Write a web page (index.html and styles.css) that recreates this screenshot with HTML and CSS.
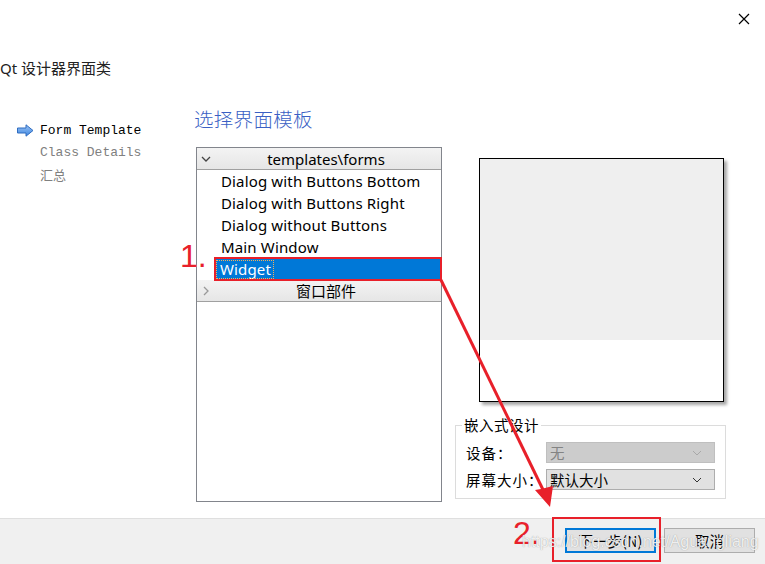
FILE: index.html
```html
<!DOCTYPE html>
<html>
<head>
<meta charset="utf-8">
<link rel="stylesheet" href="styles.css">
</head>
<body>
<div class="dialog">
  <div class="topbar">
    <svg class="close" width="12" height="12" viewBox="0 0 12 12"><path d="M1 1 L11 11 M11 1 L1 11" stroke="#000" stroke-width="1.2" fill="none"/></svg>
  </div>
  <div class="caption">Qt 设计器界面类</div>
  <div class="main">
    <div class="nav">
      <div class="nav-item active">
        <svg class="nav-icon" width="17" height="13" viewBox="0 0 17 13">
          <defs><linearGradient id="ag" x1="0" y1="0" x2="0" y2="1"><stop offset="0" stop-color="#9cc4f5"/><stop offset="1" stop-color="#3d86e0"/></linearGradient></defs>
          <path d="M0.5 4 H9 V0.8 L16 6.5 L9 12.2 V9 H0.5 Z" fill="url(#ag)" stroke="#2f6cc0" stroke-width="1"/>
        </svg>
        <span>Form Template</span>
      </div>
      <div class="nav-item"><span class="nav-icon-slot"></span><span>Class Details</span></div>
      <div class="nav-item"><span class="nav-icon-slot"></span><span>汇总</span></div>
    </div>
    <div class="content">
      <div class="page-title">选择界面模板</div>
      <div class="panes">
        <div class="tree">
          <div class="tree-header">
            <svg class="chev" width="10" height="10" viewBox="0 0 10 10"><path d="M1 3 L5 7 L9 3" stroke="#444" stroke-width="1.3" fill="none"/></svg>
            <span>templates\forms</span>
          </div>
          <div class="tree-item">Dialog with Buttons Bottom</div>
          <div class="tree-item">Dialog with Buttons Right</div>
          <div class="tree-item">Dialog without Buttons</div>
          <div class="tree-item">Main Window</div>
          <div class="tree-item selected"><span class="focus">Widget</span></div>
          <div class="tree-header">
            <svg class="chev" width="10" height="10" viewBox="0 0 10 10"><path d="M3 1 L7 5 L3 9" stroke="#999" stroke-width="1.3" fill="none"/></svg>
            <span>窗口部件</span>
          </div>
        </div>
        <div class="side">
          <div class="preview"><div class="preview-top"></div></div>
          <fieldset class="embed">
            <legend>嵌入式设计</legend>
            <div class="row">
              <span class="lbl">设备：</span>
              <div class="combo disabled"><span>无</span>
                <svg width="10" height="6" viewBox="0 0 10 6"><path d="M1 1 L5 5 L9 1" stroke="#a8a8a8" stroke-width="1" fill="none"/></svg>
              </div>
            </div>
            <div class="row">
              <span class="lbl">屏幕大小：</span>
              <div class="combo"><span>默认大小</span>
                <svg width="10" height="6" viewBox="0 0 10 6"><path d="M1 1 L5 5 L9 1" stroke="#333" stroke-width="1" fill="none"/></svg>
              </div>
            </div>
          </fieldset>
        </div>
      </div>
    </div>
  </div>
  <div class="footer">
    <button class="btn primary">下一步(N)</button>
    <button class="btn">取消</button>
  </div>
</div>

<svg class="annot" width="765" height="564" viewBox="0 0 765 564">
  <rect x="215" y="258" width="226" height="22" fill="none" stroke="#e8202a" stroke-width="2"/>
  <rect x="553" y="518" width="107" height="43" fill="none" stroke="#e8202a" stroke-width="2"/>
  <line x1="441" y1="280" x2="548" y2="500" stroke="#e8202a" stroke-width="3"/>
  <polygon points="550,507 535,490 541,489 553,486" fill="#e8202a"/>
  <text x="180" y="267" class="num">1.</text>
  <text x="513" y="544" class="num">2.</text>
</svg>
<div class="watermark">https://blog.csdn.net/Aguangliang</div>
</body>
</html>
```

FILE: styles.css
```css
html, body {
  margin: 0;
  padding: 0;
}
body {
  width: 765px;
  height: 564px;
  position: relative;
  overflow: hidden;
  background: #fff;
  font-family: "Noto Sans", "Noto Sans CJK SC", sans-serif;
  color: #000;
}
.dialog {
  display: flex;
  flex-direction: column;
  height: 564px;
}
.topbar {
  height: 40px;
  display: flex;
  justify-content: flex-end;
  align-items: flex-start;
  padding: 13px 15px 0 0;
  box-sizing: border-box;
}
.close { display: block; }
.caption {
  margin-top: 18px;
  height: 20px;
  line-height: 20px;
  font-size: 15px;
  color: #222;
  font-family: "Noto Sans", "Noto Sans CJK SC", sans-serif;
}
.main {
  flex: 1;
  display: flex;
}
.nav {
  width: 194px;
  padding-top: 41px;
  box-sizing: border-box;
  font-family: "Liberation Mono", "Noto Sans CJK SC", monospace;
  font-size: 13px;
  color: #808080;
}
.nav-item {
  height: 22px;
  display: flex;
  align-items: center;
  padding-left: 17px;
}
.nav-item.active { color: #000; }
.nav-icon { width: 17px; height: 13px; margin-right: 6px; display: block; }
.nav-icon-slot { width: 23px; display: inline-block; }
.content {
  flex: 1;
  display: flex;
  flex-direction: column;
}
.page-title {
  margin-top: 28px;
  height: 26px;
  line-height: 26px;
  font-size: 19.5px;
  color: #3a5fc4;
  font-family: "Noto Sans CJK SC", sans-serif;
  font-weight: 300;
  letter-spacing: 0.3px;
}
.panes {
  margin-top: 15px;
  display: flex;
  align-items: flex-start;
}
.tree {
  margin-left: 2px;
  width: 246px;
  height: 355px;
  box-sizing: border-box;
  border: 1px solid #82858c;
  background: #fff;
  font-size: 15px;
}
.tree-header {
  height: 22px;
  box-sizing: border-box;
  border-bottom: 1px solid #a0a0a0;
  background: linear-gradient(#f3f3f3, #e6e6e6);
  display: flex;
  align-items: center;
  justify-content: center;
  position: relative;
  padding-left: 14px;
  line-height: 20px;
}
.tree-header .chev {
  position: absolute;
  left: 4px;
  top: 6px;
}
.tree-item {
  height: 22px;
  line-height: 22px;
  padding-left: 24px;
  white-space: nowrap;
  letter-spacing: 0.15px;
}
.tree-item.selected {
  margin-left: 19px;
  padding-left: 0;
  background: #0078d7;
  color: #fff;
  height: 20px;
  line-height: 20px;
  margin-top: 1px;
  margin-bottom: 1px;
}
.focus {
  display: inline-block;
  height: 19px;
  line-height: 19px;
  padding: 0 3px 0 4px;
  outline: 1px dotted #f2b05a;
  outline-offset: -1px;
}
.side {
  margin-left: 13px;
  display: flex;
  flex-direction: column;
  align-items: flex-start;
}
.preview {
  margin-top: 11px;
  margin-left: 24px;
  width: 245px;
  height: 244px;
  box-sizing: border-box;
  border: 1px solid #000;
  background: #fff;
  box-shadow: 3px 3px 3px rgba(0,0,0,0.35);
}
.preview-top {
  height: 181px;
  background: #efefef;
}
.embed {
  margin: 14px 0 0 0;
  width: 271px;
  box-sizing: border-box;
  border: 1px solid #dcdcdc;
  padding: 0 9px 8px 10px;
  font-family: "Noto Sans CJK SC", sans-serif;
  font-size: 14.5px;
}
.embed legend {
  padding: 0 2px;
  margin-left: -4px;
  line-height: 18px;
  letter-spacing: 0.5px;
}
.row {
  display: flex;
  align-items: center;
  margin-top: 8px;
}
.row + .row { margin-top: 6px; }
.lbl {
  width: 80px;
  letter-spacing: 1px;
}
.combo {
  width: 169px;
  height: 21px;
  box-sizing: border-box;
  border: 1px solid #adadad;
  background: #e1e1e1;
  display: flex;
  align-items: center;
  justify-content: space-between;
  padding: 0 12px 0 3px;
  line-height: 19px;
}
.combo.disabled {
  background: #cccccc;
  border-color: #bfbfbf;
  color: #838383;
}
.footer {
  height: 46px;
  box-sizing: border-box;
  border-top: 1px solid #dfdfdf;
  background: #f0f0f0;
  display: flex;
  justify-content: flex-end;
  align-items: flex-start;
  padding: 9px 10px 0 0;
  gap: 8px;
}
.btn {
  width: 91px;
  height: 25px;
  box-sizing: border-box;
  border: 1px solid #adadad;
  background: #e1e1e1;
  font-family: "Noto Sans CJK SC", sans-serif;
  font-size: 14.5px;
  padding: 0;
  margin: 0;
  line-height: 21px;
  color: #000;
}
.btn.primary {
  border: 2px solid #0078d7;
}
.annot {
  position: absolute;
  left: 0;
  top: 0;
  pointer-events: none;
}
.annot .num {
  font-family: "Liberation Sans", sans-serif;
  font-size: 32px;
  fill: #e8202a;
}
.watermark {
  position: absolute;
  left: 522px;
  top: 533px;
  font-family: "Liberation Sans", sans-serif;
  font-size: 16px;
  color: rgba(255,255,255,0.85);
  text-shadow: 0 0 1px rgba(90,90,90,0.6);
  pointer-events: none;
}
```
